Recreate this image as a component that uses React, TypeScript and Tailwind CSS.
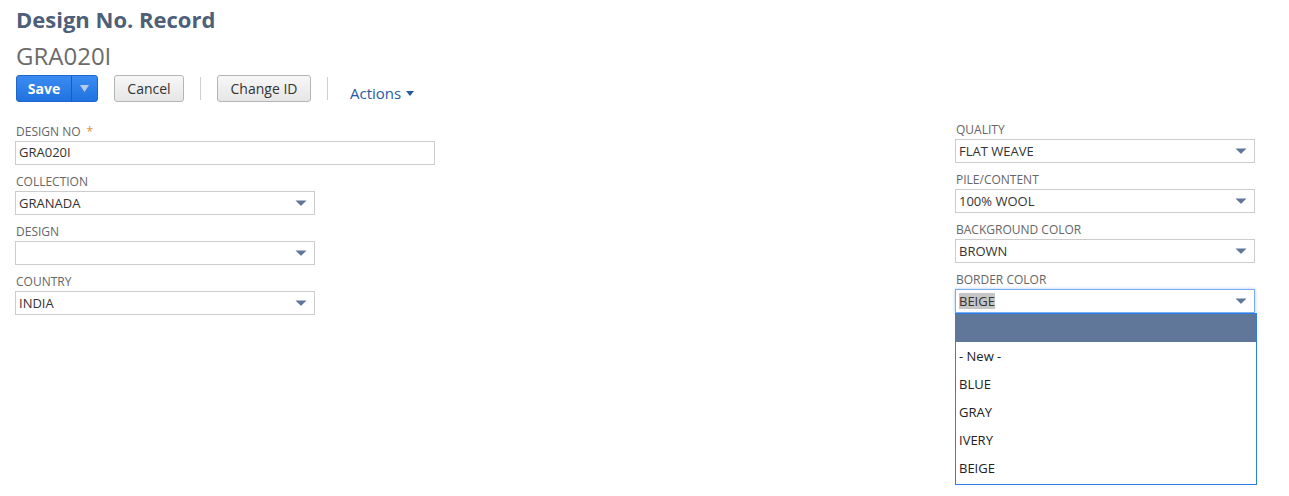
import React from 'react';

const Arrow: React.FC = () => (
  <svg width="12" height="6" viewBox="0 0 12 6" className="shrink-0">
    <path d="M0.5 0.5 H11.5 L6.7 5.3 Q6 6 5.3 5.3 Z" fill="#607799" />
  </svg>
);

const Label: React.FC<{ text: string; required?: boolean }> = ({ text, required }) => (
  <div className="h-4 pl-px text-[12px] leading-4 text-[#666] uppercase">
    {text}
    {required && <span className="ml-1.5 text-[#e5912e]">*</span>}
  </div>
);

const Select: React.FC<{ value?: string; focused?: boolean; highlight?: boolean }> = ({ value, focused, highlight }) => (
  <div
    className={
      focused
        ? 'mt-px flex h-6 w-[300px] items-center justify-between border border-[#7aaef0] bg-white pl-[3px] pr-[7px] shadow-[0_0_3px_#a9c9f3]'
        : 'mt-px flex h-6 w-[300px] items-center justify-between border border-[#cccccc] bg-white pl-[3px] pr-[7px]'
    }
  >
    <span className={highlight ? 'bg-[#c6c6c6] text-[13px] leading-4 text-[#333]' : 'text-[13px] leading-4 text-[#333]'}>
      {value}
    </span>
    <Arrow />
  </div>
);

const App: React.FC = () => {
  const options = ['- New -', 'BLUE', 'GRAY', 'IVERY', 'BEIGE'];

  return (
    <div className="min-h-[496px] bg-white pl-[15px] font-['Open_Sans',sans-serif]">
      <h1 className="ml-px pt-[5px] text-[22px] font-bold leading-7 text-[#4d5f79]">Design No. Record</h1>
      <div className="ml-px mt-[9px] text-[24px] leading-7 text-[#6b6b6b]">GRA020I</div>

      <div className="ml-px mt-[5px] flex h-[27px] items-center gap-4">
        <div className="flex h-[27px] overflow-hidden rounded-[3px] border border-[#1f66cc] bg-gradient-to-b from-[#3b8cf0] to-[#1f72e0]">
          <button className="w-[55px] border-r border-[#1a5bbb] text-[14px] font-bold text-white">Save</button>
          <button className="flex w-[25px] items-center justify-center">
            <svg width="9" height="7" viewBox="0 0 9 7">
              <path d="M0 0 H9 L4.5 7 Z" fill="#b9cbe9" />
            </svg>
          </button>
        </div>
        <button className="h-[27px] w-[70px] rounded-[3px] border border-[#b4b4b4] bg-gradient-to-b from-[#f7f7f7] to-[#e6e6e6] text-[14px] text-[#333]">
          Cancel
        </button>
        <div className="h-[23px] w-px bg-[#cfcfcf]" />
        <button className="h-[27px] w-[94px] rounded-[3px] border border-[#b4b4b4] bg-gradient-to-b from-[#f7f7f7] to-[#e6e6e6] text-[14px] text-[#333]">
          Change ID
        </button>
        <div className="h-[23px] w-px bg-[#cfcfcf]" />
        <div className="ml-[6px] mt-[9px] flex items-center gap-[5px] text-[15px] text-[#255ba3]">
          Actions
          <svg width="8" height="5" viewBox="0 0 8 5">
            <path d="M0 0 H8 L4 5 Z" fill="#255ba3" />
          </svg>
        </div>
      </div>

      <div className="mt-[22px] flex">
        <div className="flex w-[940px] flex-col gap-[9px]">
          <div>
            <Label text="Design No" required />
            <div className="mt-px flex h-6 w-[420px] items-center border border-[#cccccc] pl-[3px] text-[13px] text-[#333]">
              GRA020I
            </div>
          </div>
          <div>
            <Label text="Collection" />
            <Select value="GRANADA" />
          </div>
          <div>
            <Label text="Design" />
            <Select value="" />
          </div>
          <div>
            <Label text="Country" />
            <Select value="INDIA" />
          </div>
        </div>

        <div className="-mt-[2px] flex flex-col gap-[9px]">
          <div>
            <Label text="Quality" />
            <Select value="FLAT WEAVE" />
          </div>
          <div>
            <Label text="Pile/Content" />
            <Select value="100% WOOL" />
          </div>
          <div>
            <Label text="Background Color" />
            <Select value="BROWN" />
          </div>
          <div className="relative">
            <Label text="Border Color" />
            <Select value="BEIGE" focused highlight />
            <div className="absolute left-0 top-[41px] z-10 w-[302px] border border-[#2b7de9] bg-white">
              <div className="h-[28px] bg-[#607799]" />
              {options.map((o) => (
                <div key={o} className="h-[28px] pl-[3px] pt-[6px] text-[13px] leading-4 text-[#222]">
                  {o}
                </div>
              ))}
              <div className="h-[2px]" />
            </div>
          </div>
        </div>
      </div>
    </div>
  );
};

export default App;
